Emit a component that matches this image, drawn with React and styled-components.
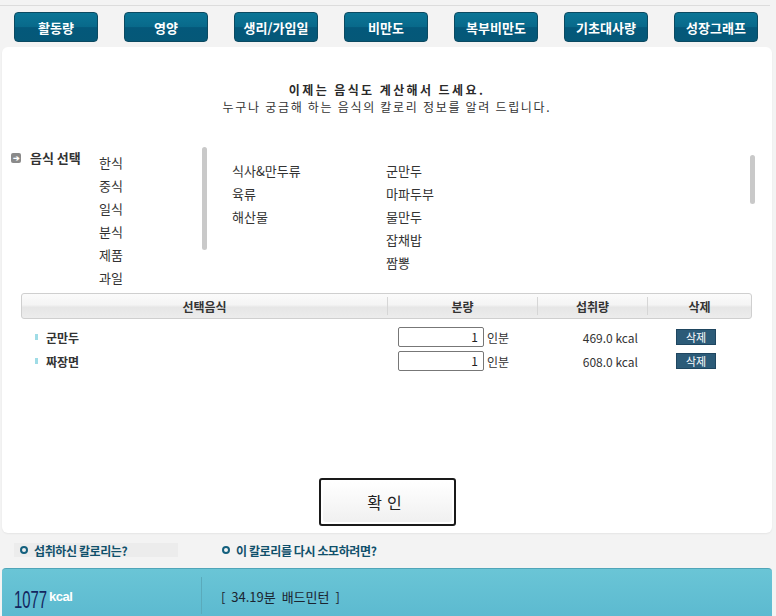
import styled, { createGlobalStyle } from "styled-components";

const GlobalStyle = createGlobalStyle`
  html, body {
    margin: 0;
    padding: 0;
    background: #f3f3f3;
    font-family: "Noto Sans CJK KR", "Noto Sans", sans-serif;
    font-size: 12px;
    color: #222;
  }
  * { box-sizing: border-box; }
`;

const Page = styled.div`
  width: 776px;
  height: 616px;
  overflow: hidden;
  display: flex;
  flex-direction: column;
  border-top: 5px solid #f3f3f3;
`;

const TopLine = styled.div`
  height: 1px;
  margin-right: 6px;
  background: #dcdcdc;
`;

const Nav = styled.div`
  display: flex;
  gap: 26px;
  padding: 6px 0 0 14px;
  height: 41px;
`;

const NavButton = styled.div`
  width: 84px;
  height: 30px;
  border: 1px solid #0b4a61;
  border-radius: 4px;
  background: linear-gradient(#0b7596 0%, #08698a 50%, #04587a 52%, #055878 100%);
  color: #fff;
  font-weight: 700;
  font-size: 13px;
  display: flex;
  align-items: center;
  justify-content: center;
`;

const Panel = styled.div`
  margin: 0 4px 0 2px;
  height: 486px;
  background: #fff;
  border-radius: 6px;
  box-shadow: 0 1px 2px rgba(0,0,0,0.06);
  display: flex;
  flex-direction: column;
`;

const Intro = styled.div`
  text-align: center;
  padding-top: 34px;
`;

const IntroTitle = styled.div`
  font-weight: 700;
  font-size: 12px;
  line-height: 17px;
  color: #2a2a2a;
  letter-spacing: 2.4px;
`;

const IntroText = styled.div`
  font-size: 12px;
  line-height: 17px;
  color: #333;
  letter-spacing: 1.7px;
`;

const Picker = styled.div`
  display: flex;
  margin-top: 36px;
  height: 142px;
`;

const PickerLabel = styled.div`
  display: flex;
  align-items: flex-start;
  gap: 9px;
  width: 97px;
  padding-left: 9px;
  font-weight: 700;
  font-size: 13px;
  color: #333;
  line-height: 14px;
`;

const ArrowBox = styled.span`
  width: 10px;
  height: 10px;
  margin-top: 2px;
  background: #8a8a8a;
  border-radius: 2px;
  color: #fff;
  font-size: 8px;
  line-height: 10px;
  text-align: center;
`;

const Column = styled.div`
  width: ${p => p.$w}px;
  padding-top: ${p => p.$top}px;
  display: flex;
  flex-direction: column;
  gap: 7px;
  font-size: 13px;
  color: #333;
  line-height: 16px;
`;

const ScrollTrack = styled.div`
  width: 5px;
  position: relative;
  margin-right: ${p => p.$mr || 0}px;
`;

const ScrollThumb = styled.div`
  position: absolute;
  top: ${p => p.$top}px;
  left: 0;
  width: 5px;
  height: ${p => p.$h}px;
  border-radius: 3px;
  background: #c9c9c9;
`;

const Spacer = styled.div`
  flex: 1;
`;

const Table = styled.div`
  margin: 0 20px 0 19px;
`;

const HeaderRow = styled.div`
  display: grid;
  grid-template-columns: 365px 150px 110px 1fr;
  height: 26px;
  border: 1px solid #cfcfcf;
  border-radius: 3px;
  background: linear-gradient(#fbfbfb 0%, #f4f4f4 45%, #e6e6e6 55%, #ececec 100%);
`;

const HeaderCell = styled.div`
  display: flex;
  align-items: center;
  justify-content: center;
  font-weight: 700;
  font-size: 12px;
  color: #333;
  border-left: ${p => (p.$first ? "none" : "1px solid #d6d6d6")};
  margin: 3px 0;
`;

const Rows = styled.div`
  display: flex;
  flex-direction: column;
  gap: 5px;
  padding-top: 8px;
`;

const Row = styled.div`
  display: grid;
  grid-template-columns: 377px 140px 100px 1fr;
  align-items: center;
  height: 19px;
  white-space: nowrap;
`;

const FoodName = styled.div`
  display: flex;
  align-items: center;
  gap: 8px;
  padding-left: 14px;
  font-weight: 700;
  font-size: 12px;
  color: #333;
`;

const Bullet = styled.span`
  width: 3px;
  height: 6px;
  background: #9fdce6;
`;

const Amount = styled.div`
  display: flex;
  align-items: center;
  gap: 3px;
  font-size: 12px;
  color: #333;
`;

const AmountInput = styled.div`
  width: 86px;
  height: 20px;
  border: 1px solid #777;
  border-radius: 2px;
  padding-right: 5px;
  text-align: right;
  line-height: 18px;
  font-size: 12px;
  color: #222;
`;

const Kcal = styled.div`
  text-align: right;
  font-size: 12px;
  color: #333;
`;

const DeleteCell = styled.div`
  padding-left: 38px;
`;

const DeleteButton = styled.div`
  width: 40px;
  height: 16px;
  background: #2c5b78;
  border: 1px solid #1f4660;
  color: #fff;
  font-size: 11px;
  line-height: 14px;
  text-align: center;
`;

const Footer = styled.div`
  display: flex;
  justify-content: center;
  padding-bottom: 7px;
`;

const ConfirmButton = styled.div`
  width: 137px;
  height: 48px;
  border: 2px solid #1a1a1a;
  border-radius: 3px;
  padding: 2px;
  background: #fff;
`;

const ConfirmInner = styled.div`
  height: 100%;
  border-radius: 3px;
  background: linear-gradient(#fff, #f0f0f0);
  display: flex;
  align-items: center;
  justify-content: center;
  font-size: 16px;
  color: #222;
  letter-spacing: 5px;
`;

const Questions = styled.div`
  display: flex;
  gap: 44px;
  padding: 10px 0 0 14px;
  height: 35px;
`;

const Question = styled.div`
  width: ${p => p.$w}px;
  height: 14px;
  display: flex;
  align-items: center;
  gap: 6px;
  padding-left: ${p => (p.$shade ? 6 : 0)}px;
  background: ${p => (p.$shade ? "#ececec" : "transparent")};
  font-weight: 700;
  font-size: 12px;
  color: #10506b;
  letter-spacing: -0.4px;
`;

const Ring = styled.span`
  width: 8px;
  height: 8px;
  border-radius: 50%;
  border: 2px solid #14607e;
`;

const ResultBar = styled.div`
  margin: 0 4px 0 2px;
  flex: 1;
  border-radius: 4px 4px 0 0;
  border-top: 1px solid #4fa5b8;
  background: linear-gradient(#6ac5d6, #5cbad0);
  display: flex;
`;

const TotalCell = styled.div`
  width: 200px;
  display: flex;
  align-items: flex-start;
  padding: 11px 0 0 12px;
  border-right: 1px solid #5aaabb;
  margin: 8px 0 2px;
`;

const Total = styled.span`
  display: inline-block;
  font-family: "Liberation Sans", Arial, sans-serif;
  font-size: 24px;
  line-height: 24px;
  color: #132660;
  transform: scaleX(0.62);
  transform-origin: left top;
  width: 35px;
`;

const TotalUnit = styled.span`
  font-family: "Liberation Sans", Arial, sans-serif;
  font-weight: 700;
  font-size: 13px;
  line-height: 15px;
  color: #fff;
  margin-top: 1px;
  letter-spacing: -0.5px;
`;

const Burn = styled.div`
  padding: 18px 0 0 19px;
  font-size: 13px;
  color: #1b2430;
  word-spacing: 3px;
`;

const navItems = ["활동량", "영양", "생리/가임일", "비만도", "복부비만도", "기초대사량", "성장그래프"];
const categories = ["한식", "중식", "일식", "분식", "제품", "과일"];
const groups = ["식사&만두류", "육류", "해산물"];
const foods = ["군만두", "마파두부", "물만두", "잡채밥", "짬뽕"];
const selected = [
  { name: "군만두", qty: 1, kcal: "469.0" },
  { name: "짜장면", qty: 1, kcal: "608.0" },
];

export default function App() {
  return (
    <>
      <GlobalStyle />
      <Page>
        <TopLine />
        <Nav>
          {navItems.map(n => (
            <NavButton key={n}>{n}</NavButton>
          ))}
        </Nav>
        <Panel>
          <Intro>
            <IntroTitle>이제는 음식도 계산해서 드세요.</IntroTitle>
            <IntroText>누구나 궁금해 하는 음식의 칼로리 정보를 알려 드립니다.</IntroText>
          </Intro>
          <Picker>
            <PickerLabel>
              <ArrowBox>➔</ArrowBox>
              음식 선택
            </PickerLabel>
            <Column $w={103} $top={4}>
              {categories.map(c => <div key={c}>{c}</div>)}
            </Column>
            <ScrollTrack $mr={25}>
              <ScrollThumb $top={-4} $h={103} />
            </ScrollTrack>
            <Column $w={154} $top={12}>
              {groups.map(g => <div key={g}>{g}</div>)}
            </Column>
            <Column $w={364} $top={12}>
              {foods.map(f => <div key={f}>{f}</div>)}
            </Column>
            <ScrollTrack>
              <ScrollThumb $top={4} $h={49} />
            </ScrollTrack>
          </Picker>
          <Table>
            <HeaderRow>
              <HeaderCell $first>선택음식</HeaderCell>
              <HeaderCell>분량</HeaderCell>
              <HeaderCell>섭취량</HeaderCell>
              <HeaderCell>삭제</HeaderCell>
            </HeaderRow>
            <Rows>
              {selected.map(s => (
                <Row key={s.name}>
                  <FoodName>
                    <Bullet />
                    {s.name}
                  </FoodName>
                  <Amount>
                    <AmountInput>{s.qty}</AmountInput>
                    인분
                  </Amount>
                  <Kcal>{s.kcal} kcal</Kcal>
                  <DeleteCell>
                    <DeleteButton>삭제</DeleteButton>
                  </DeleteCell>
                </Row>
              ))}
            </Rows>
          </Table>
          <Spacer />
          <Footer>
            <ConfirmButton>
              <ConfirmInner>확인</ConfirmInner>
            </ConfirmButton>
          </Footer>
        </Panel>
        <Questions>
          <Question $w={164} $shade>
            <Ring />
            섭취하신 칼로리는?
          </Question>
          <Question $w={260}>
            <Ring />
            이 칼로리를 다시 소모하려면?
          </Question>
        </Questions>
        <ResultBar>
          <TotalCell>
            <Total>1077</Total>
            <TotalUnit>kcal</TotalUnit>
          </TotalCell>
          <Burn>[ 34.19분  배드민턴 ]</Burn>
        </ResultBar>
      </Page>
    </>
  );
}
